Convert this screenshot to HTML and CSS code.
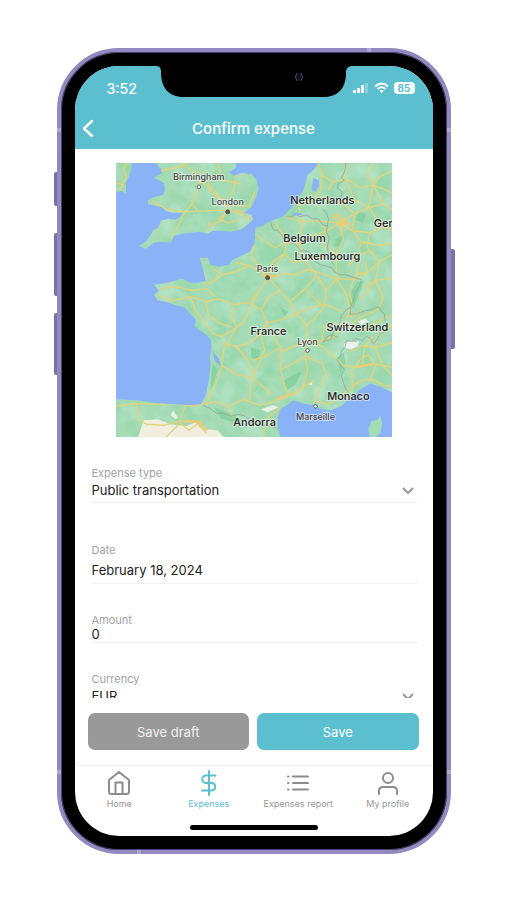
FILE: index.html
```html
<!DOCTYPE html>
<html lang="en">
<head>
    <meta charset="UTF-8">
    <meta name="viewport" content="width=device-width, initial-scale=1.0">
    <title>Confirm expense</title>
    <link rel="stylesheet" href="styles.css">
</head>
<body>
    <div class="phone">
        <span class="side-button mute"></span>
        <span class="side-button volume-up"></span>
        <span class="side-button volume-down"></span>
        <span class="side-button power"></span>
        <span class="band band-top"></span>
        <span class="band band-bottom"></span>
        <span class="band band-left"></span>
        <span class="band band-left low"></span>
        <span class="band band-right"></span>
        <span class="band band-right low"></span>

        <div class="screen">
            <svg class="notch" width="198" height="31" viewBox="0 0 198 31" aria-hidden="true">
                <path d="M0 0C4 0 6 1 6 6C6 21 13 31 29 31H169C183 31 191 22 191 7C191 2 193 0 198 0Z" fill="#000"/>
                <circle cx="144" cy="11" r="4" fill="#11101c"/>
                <path d="M142 7Q139 11 142 15M146 7Q149 11 146 15" fill="none" stroke="#4a4560" stroke-width="1"/>
            </svg>

            <header>
                <div class="status-bar">
                    <span class="time">3:52</span>
                    <div class="status-icons">
                        <svg width="16" height="12" viewBox="0 0 16 12" fill="#fff" aria-hidden="true">
                            <rect x="0" y="8" width="3" height="3" rx="1"/>
                            <rect x="4" y="6" width="3" height="5" rx="1"/>
                            <rect x="8" y="3" width="3" height="8" rx="1"/>
                            <rect x="12" y="1" width="3" height="10" rx="1" opacity="0.3"/>
                        </svg>
                        <svg width="15" height="12" viewBox="0 0 15 12" aria-hidden="true">
                            <path d="M1 4.500Q7.500-1.500 14 4.500M3.500 7Q7.500 3.500 11.500 7" fill="none" stroke="#fff" stroke-width="2"/>
                            <path d="M5.300 8.800Q7.500 7 9.700 8.800L7.500 11Z" fill="#fff"/>
                        </svg>
                        <span class="battery">85</span>
                    </div>
                </div>
                <div class="title-bar">
                    <button type="button" class="back" aria-label="Back">
                        <svg width="12" height="18" viewBox="0 0 12 18" aria-hidden="true">
                            <path d="M10 2L2 9.500L10 17" fill="none" stroke="#fff" stroke-width="2.400" stroke-linecap="round" stroke-linejoin="round"/>
                        </svg>
                    </button>
                    <h1>Confirm expense</h1>
                </div>
            </header>

            <main>
                <svg class="map" viewBox="0 0 277 275" role="img" aria-label="Map">
                    <defs>
                        <clipPath id="land">
                            <path d="M0 0H16L15 8L10 20V30L5 28L0 29Z"/>
                            <path d="M40 0L45 6L46 10L38 15L43 17L48 20L49 27L47 32L38 34L32 37L32 41L45 44L50 48L57 50L67 50L63 55L60 57L53 56L45 58L42 65L38 67L34 73L30 79L23 83L30 86L38 80L45 79L55 80L58 73L66 71L75 70L84 69L92 71L97 68L105 68L115 69L125 67L133 61L137 57L136 52L128 50L135 45L141 33L143 26L141 17L136 11L126 10L118 13L113 9L120 5V0Z"/>
                            <path d="M203 0L198 7L192 12L190 20L187 30L181 36L178 43L171 50L167 54L155 58L147 63L140 65L139 80L134 89L126 93L117 97L113 102L104 104L95 102L92 95L84 95L87 105L90 118L82 120L75 120L66 116L62 117L52 120L38 122L43 128L38 132L42 138L49 139L58 142L69 145L73 150L80 157L79 164L89 171L95 177L96 185L94 194L95 202L93 218L90 233L85 242L72 243L58 242L42 241L22 238L0 237V275H165L162 264L162 255L165 247L178 238L187 241L198 243L207 247L215 248L226 244L232 238L245 227L255 221L267 225L277 230V0Z"/>
                            <path d="M265 253L267 261L265 271L260 275H255L253 267L256 259L263 257Z"/>
                        </clipPath>
                        <filter id="terrain" x="0" y="0" width="100%" height="100%" color-interpolation-filters="sRGB">
                            <feTurbulence type="fractalNoise" baseFrequency="0.05" numOctaves="3" seed="8"/>
                            <feColorMatrix values="0 0 0 0 0.53 0 0 0 0 0.83 0 0 0 0 0.63 3 0 0 0 -1.300"/>
                        </filter>
                        <filter id="hills" x="0" y="0" width="100%" height="100%" color-interpolation-filters="sRGB">
                            <feTurbulence type="fractalNoise" baseFrequency="0.05" numOctaves="3" seed="21"/>
                            <feColorMatrix values="0 0 0 0 0.73 0 0 0 0 0.90 0 0 0 0 0.80 3 0 0 0 -1.400"/>
                        </filter>
                    </defs>
                    <rect width="277" height="275" fill="#89b2f7"/>
                    <g clip-path="url(#land)">
                        <rect width="277" height="275" fill="#a5dbb5"/>
                        <rect width="277" height="275" filter="url(#terrain)" opacity="0.5"/>
                        <rect width="277" height="275" filter="url(#hills)" opacity="0.7"/>
                        <!-- dry ground and snow -->
                        <path d="M28 258L42 257L55 262L70 264L80 260L88 267L102 268L108 275H22Z" fill="#f1eee0"/>
                        <path d="M57 248L62 255L60 257L55 253Z" fill="#e8f3e6"/>
                        <path d="M229 181L236 178L240 180L244 178L242 184L235 187L229 185Z" fill="#e9f2ef"/>
                        <path d="M242 159L250 156L254 159L246 162ZM145 247L158 243L163 245L152 250ZM192 221L197 219L196 223Z" fill="#e8f3e6"/>
                        <!-- woodland -->
                        <g fill="#76cd93" opacity="0.6">
                            <path d="M242 119L249 118L243 132L238 146L234 142L237 127Z"/>
                            <path d="M244 48L251 52L248 60L240 57ZM220 76L229 73L226 83L219 84Z"/>
                            <path d="M168 218L178 212L186 209L180 222L171 228ZM222 195L228 190L230 200L225 211Z"/>
                            <path d="M97 202L102 207L97 224L94 228ZM135 185L145 188L143 198L136 195Z"/>
                            <path d="M98 245L112 250L126 257L120 261L105 256ZM165 145L173 149L169 154Z"/>
                        </g>
                        <!-- roads -->
                        <g fill="none" stroke="#e3d37c" stroke-width="1.400" stroke-linejoin="round">
                            <path d="M3 29L10 14L7 5L12 0M0 20L8 22M65 0L77 8L84 18L82 29L76 41L68 51L63 62L55 76M36 38L50 46L67 49L90 48L112 47L126 52L136 57M84 18L98 27L110 42L112 47M82 8L92 15L94 27L106 38M94 58L92 67M110 42L133 44L139 29M112 47L105 58L95 63M76 41L82 48M112 48L103 56L112 60L124 57M102 0L106 17L125 21M121 6L119 22L114 38M44 8L59 5L72 2"/>
                            <path d="M203 0L206 12L218 19L232 16L245 25L258 22L277 30M195 38L208 34L224 39L239 37L253 45L268 41L277 47M183 43L195 38L205 27L206 12M232 0L228 14L235 27L239 37M258 0L252 12L258 22L253 45M277 8L264 14L258 22"/>
                            <path d="M138 70L150 79L160 85L171 78L183 82L197 73L211 68L224 60L239 51L253 45M160 60L171 78L169 91L156 109M183 43L187 59L183 82L190 97L201 113M171 54L187 59L203 58L224 60L228 76L221 91L207 94L190 97M239 51L237 68L246 79L241 94L233 103M224 60L237 68L254 70L277 61M246 79L264 83L277 80M254 45L264 61L277 68"/>
                            <path d="M120 100L134 103L145 109L153 115L166 111L180 112L193 107L207 111L221 116L239 117L252 110L264 99L277 92M153 115L143 129L133 140L118 142L103 136L90 139L75 134L57 138L43 133M95 104L106 112L120 109L134 103M88 122L97 119L106 112M43 126L61 124L76 128L90 126L100 134M153 115L164 128L174 139L181 151L191 163L193 179L190 194L192 207L188 224L178 233M140 82L136 93L145 109"/>
                            <path d="M221 91L221 116L231 132L234 147L229 164L218 174L206 179L193 179M243 95L241 111L234 128L237 142M153 115L157 99L169 91M201 113L211 128L208 145L198 157L191 163M181 151L195 145L211 142L226 149M264 99L260 118L268 134L263 147L246 154L233 164M277 115L260 118L247 125"/>
                            <path d="M143 129L135 145L128 160L116 168L106 174L97 171M133 140L146 147L151 160L145 171L133 181L121 184L107 181M118 142L116 155L121 164L115 175L108 187L106 203L104 210L99 224L90 241M151 160L159 174L166 189L165 207L169 223L174 233M121 184L132 198L137 208L135 224L134 238M106 203L120 212L136 215L147 224L157 233M145 171L149 187L144 200L136 215M90 139L93 153L105 161L115 164M75 134L79 147L88 158L97 171"/>
                            <path d="M0 244L20 241L40 242L57 241L76 244L89 242M20 241L22 257L31 262L48 263L64 259L80 260L91 271M69 243L66 255L64 261L50 275M89 242L99 239L112 244L128 237L144 243L159 239L174 233L187 226L198 218M165 245L151 257L147 275M62 259L73 268L87 258M112 244L117 255"/>
                            <path d="M137 198L151 193L166 184M193 179L207 184L216 192L228 203M206 179L209 164L222 160M190 194L207 201L211 213L205 224L199 238M198 238L213 242L226 233L238 224L246 218L258 217L268 223L277 224M234 190L246 183L260 185L277 180M228 203L243 205L258 201L277 205M238 224L236 210L245 197L253 192L260 203L255 218M247 205L249 185L257 174M277 163L264 172L260 185L268 204L277 213M233 164L248 168L259 161L277 152"/>
                            <path d="M190 97L178 100L169 91M201 113L190 126L174 139M211 128L221 116M190 126L208 145M164 128L152 135L146 147M151 160L166 157L181 151M166 189L178 184L193 179M165 207L178 201L190 194M203 58L211 68L207 81L221 91M239 51L232 44L224 39M241 94L254 88L264 99M254 70L252 84L254 88M213 27L218 19M258 22L268 41M241 111L252 110L250 98M244 137L254 126L260 118"/>
                        </g>
                        <g fill="none" stroke="#f0ca72" stroke-width="2">
                            <path d="M221 51L229 58L235 64M223 62L234 60M226 54L226 72M218 52L222 59M146 114L154 112L161 116M120 47L130 50M71 258L84 260L91 268M160 237L174 232M234 154L246 149M242 204L257 202"/>
                        </g>
                        <!-- borders -->
                        <path d="M231 0L229 9L226 15L229 17L223 21L222 25L227 29L226 34L215 36M155 58L156 63L158 67L163 68L166 72L170 78L179 81L183 85L185 88L191 88L195 91L197 97L205 102L210 103L216 105L219 109L224 112L230 112L236 114L246 117L244 124L240 130L238 138L235 145L231 147L226 153L225 159L223 164L218 169L217 173L215 177L207 179M171 54L176 54L180 51L184 54L191 52L197 56L203 56L207 62L212 63L211 70L214 75L212 83L213 91L218 102M207 46L211 50L213 56L212 63M235 145L235 152L242 151L250 148L256 147L263 144L266 149L269 151L270 159L273 166L264 172L262 177L258 181L255 176L251 174L247 178L241 176L237 179L231 178L230 184L226 189L225 194L221 197L225 202L229 207L226 213L228 220L230 226L234 231M87 243L94 246L101 251L108 251L115 254L123 252L130 254L136 260L143 263L152 263L162 266M209 179L212 174L216 172L223 175" fill="none" stroke="#94a5a0" stroke-width="0.800"/>
                    </g>
                    <path d="M198 15L203 17L204 22L200 29L196 26ZM177 50L185 50L187 52L179 53ZM96 188L103 196L105 204L99 198Z" fill="#89b2f7"/>
                    <g fill="#fff" stroke="#555" stroke-width="1">
                        <circle cx="83" cy="24" r="1.800"/>
                        <circle cx="192" cy="188" r="1.800"/>
                        <circle cx="200" cy="244" r="1.800"/>
                        <circle cx="112" cy="49" r="2" fill="#555"/>
                        <circle cx="152" cy="115" r="2" fill="#555"/>
                    </g>
                    <g class="city">
                        <text x="83" y="17">Birmingham</text>
                        <text x="112" y="42">London</text>
                        <text x="152" y="109">Paris</text>
                        <text x="192" y="182">Lyon</text>
                        <text x="200" y="258">Marseille</text>
                    </g>
                    <g class="country">
                        <text x="207" y="41">Netherlands</text>
                        <text x="189" y="79">Belgium</text>
                        <text x="212" y="97">Luxembourg</text>
                        <text x="268" y="64">Ger</text>
                        <text x="153" y="172">France</text>
                        <text x="242" y="168">Switzerland</text>
                        <text x="233" y="238">Monaco</text>
                        <text x="139" y="264">Andorra</text>
                    </g>
                </svg>

                <form id="expenseForm">
                    <div class="form-group spaced">
                        <label for="type">Expense type</label>
                        <select id="type" name="type">
                            <option>Public transportation</option>
                        </select>
                        <svg class="chevron" width="12" height="8" viewBox="0 0 12 8" aria-hidden="true">
                            <path d="M1 1L6 6L11 1"/>
                        </svg>
                    </div>
                    <div class="form-group">
                        <label for="date">Date</label>
                        <input type="text" id="date" name="date" class="date" value="February 18, 2024">
                    </div>
                    <div class="form-group">
                        <label for="amount">Amount</label>
                        <input type="text" id="amount" name="amount" class="amount" inputmode="decimal" value="0">
                    </div>
                    <div class="form-group">
                        <label for="currency">Currency</label>
                        <select id="currency" name="currency">
                            <option>EUR</option>
                        </select>
                        <svg class="chevron" width="12" height="8" viewBox="0 0 12 8" aria-hidden="true">
                            <path d="M1 1L6 6L11 1"/>
                        </svg>
                    </div>
                </form>
            </main>

            <div class="actions">
                <button type="button" class="draft">Save draft</button>
                <button type="submit" form="expenseForm" class="save">Save</button>
            </div>

            <nav>
                <a href="#home">
                    <svg width="26" height="26" viewBox="0 0 26 26" aria-hidden="true">
                        <path d="M3 10L13 2L23 10V21.500Q23 24 20.500 24H5.500Q3 24 3 21.500ZM9.500 24V12.500H16.500V24"/>
                    </svg>
                    Home
                </a>
                <a href="#expenses" class="active">
                    <svg width="26" height="26" viewBox="0 0 26 26" aria-hidden="true">
                        <path d="M13 1V25M19.500 5.500H10A3.700 3.700 0 0 0 10 13H16A3.800 3.800 0 0 1 16 20.500H6"/>
                    </svg>
                    Expenses
                </a>
                <a href="#report">
                    <svg width="26" height="26" viewBox="0 0 26 26" aria-hidden="true">
                        <path d="M8 6.500H23M8 13H23M8 19.500H23M3 6.500H3.500M3 13H3.500M3 19.500H3.500"/>
                    </svg>
                    Expenses report
                </a>
                <a href="#profile">
                    <svg width="26" height="26" viewBox="0 0 26 26" aria-hidden="true">
                        <circle cx="13" cy="8" r="5"/>
                        <path d="M4 24V21Q4 17 8 17H18Q22 17 22 21V24"/>
                    </svg>
                    My profile
                </a>
            </nav>
            <div class="home-indicator"></div>
        </div>
    </div>
</body>
</html>
```

FILE: styles.css
```css
* {
    margin: 0;
    padding: 0;
    box-sizing: border-box;
    font-family: Inter, "Liberation Sans", sans-serif;
}

body {
    min-height: 100vh;
    background: #fff;
    display: flex;
    justify-content: center;
    padding: 48px 20px 46px;
}

.phone {
    position: relative;
    width: 100%;
    max-width: 394px;
    height: calc(100vh - 94px);
    min-height: 600px;
    padding: 14px;
    background: #000;
    border: 4px solid #9488c0;
    border-radius: 62px;
    box-shadow: inset 0 0 0 1px #4b426f;
}

.side-button {
    position: absolute;
    left: -7px;
    width: 3px;
    background: #7d71ac;
    border-radius: 2px 0 0 2px;
}

.mute {
    top: 120px;
    height: 34px;
}

.volume-up {
    top: 181px;
    height: 63px;
}

.volume-down {
    top: 261px;
    height: 62px;
}

.power {
    top: 197px;
    left: auto;
    right: -8px;
    width: 4px;
    height: 100px;
    border-radius: 0 2px 2px 0;
}

.band {
    position: absolute;
    width: 4px;
    height: 4px;
    background: #b1a8d2;
}

.band-top {
    top: -4px;
    right: 76px;
}

.band-bottom {
    bottom: -4px;
    left: 76px;
}

.band-left {
    top: 76px;
    left: -4px;
}

.band-right {
    top: 76px;
    right: -4px;
}

.band.low {
    top: auto;
    bottom: 76px;
}

.screen {
    position: relative;
    height: 100%;
    display: flex;
    flex-direction: column;
    background: #fff;
    border-radius: 44px;
    overflow: hidden;
}

.notch {
    position: absolute;
    top: 0;
    left: 50%;
    transform: translateX(-50%);
}

header {
    background: #5bbfd0;
    color: #fff;
}

.status-bar {
    display: flex;
    justify-content: space-between;
    align-items: center;
    height: 44px;
    padding: 0 18px 0 32px;
}

.time {
    font-size: 14px;
    font-weight: 500;
}

.status-icons {
    display: flex;
    align-items: center;
    gap: 5px;
}

.battery {
    width: 21px;
    height: 12px;
    background: #fff;
    border-radius: 4px;
    color: #5bbfd0;
    font-size: 10px;
    font-weight: 700;
    line-height: 12px;
    text-align: center;
}

.title-bar {
    position: relative;
    height: 39px;
}

.back {
    position: absolute;
    left: 7px;
    top: 9px;
    display: flex;
    background: none;
    border: none;
    cursor: pointer;
}

h1 {
    font-size: 15px;
    font-weight: 500;
    line-height: 38px;
    text-align: center;
}

main {
    flex: 1;
    min-height: 0;
    overflow: hidden;
    padding: 14px 16px 0 17px;
}

.map {
    display: block;
    width: 85%;
    margin: 0 auto 29px;
}

.map text {
    text-anchor: middle;
    paint-order: stroke;
    stroke: rgba(255, 255, 255, 0.5);
    stroke-width: 2px;
}

.city text {
    font-size: 9px;
    font-weight: 500;
    fill: #444;
}

.country text {
    font-size: 11px;
    font-weight: 500;
    fill: #222;
}

.form-group {
    position: relative;
    margin-bottom: 29px;
}

.spaced {
    margin-bottom: 40px;
}

label {
    display: block;
    color: #a3a3a3;
    font-size: 11px;
    line-height: 14px;
}

input,
select {
    display: block;
    width: 100%;
    height: 23px;
    padding-bottom: 2px;
    background: none;
    border: none;
    border-bottom: 1px solid #f0f0f0;
    border-radius: 0;
    outline: none;
    appearance: none;
    color: #222;
    font-size: 13px;
}

.date {
    height: 27px;
    padding-bottom: 0;
}

.amount {
    height: 16px;
}

.chevron {
    position: absolute;
    right: 3px;
    bottom: 8px;
    fill: none;
    stroke: #999;
    stroke-width: 2px;
}

.actions {
    display: flex;
    gap: 8px;
    padding: 15px 14px 15px 13px;
}

.actions button {
    flex: 1;
    height: 37px;
    border: none;
    border-radius: 7px;
    color: #fff;
    font-size: 13px;
    cursor: pointer;
}

.actions .draft {
    background: #999;
    color: #f0f0f0;
}

.actions .save {
    background: #5bbfd0;
}

nav {
    display: flex;
    border-top: 1px solid #f0f0f0;
    padding-top: 4px;
}

nav a {
    flex: 1;
    display: flex;
    flex-direction: column;
    align-items: center;
    gap: 2px;
    color: #999;
    font-size: 9px;
    line-height: 12px;
    text-decoration: none;
    white-space: nowrap;
}

nav svg {
    fill: none;
    stroke: #8c8c8c;
    stroke-width: 2px;
    stroke-linecap: round;
    stroke-linejoin: round;
}

nav .active {
    color: #5bbfd0;
}

nav .active svg {
    stroke: #5bbfd0;
}

.home-indicator {
    width: 128px;
    height: 5px;
    margin: 15px auto 6px;
    background: #000;
    border-radius: 3px;
}
```
